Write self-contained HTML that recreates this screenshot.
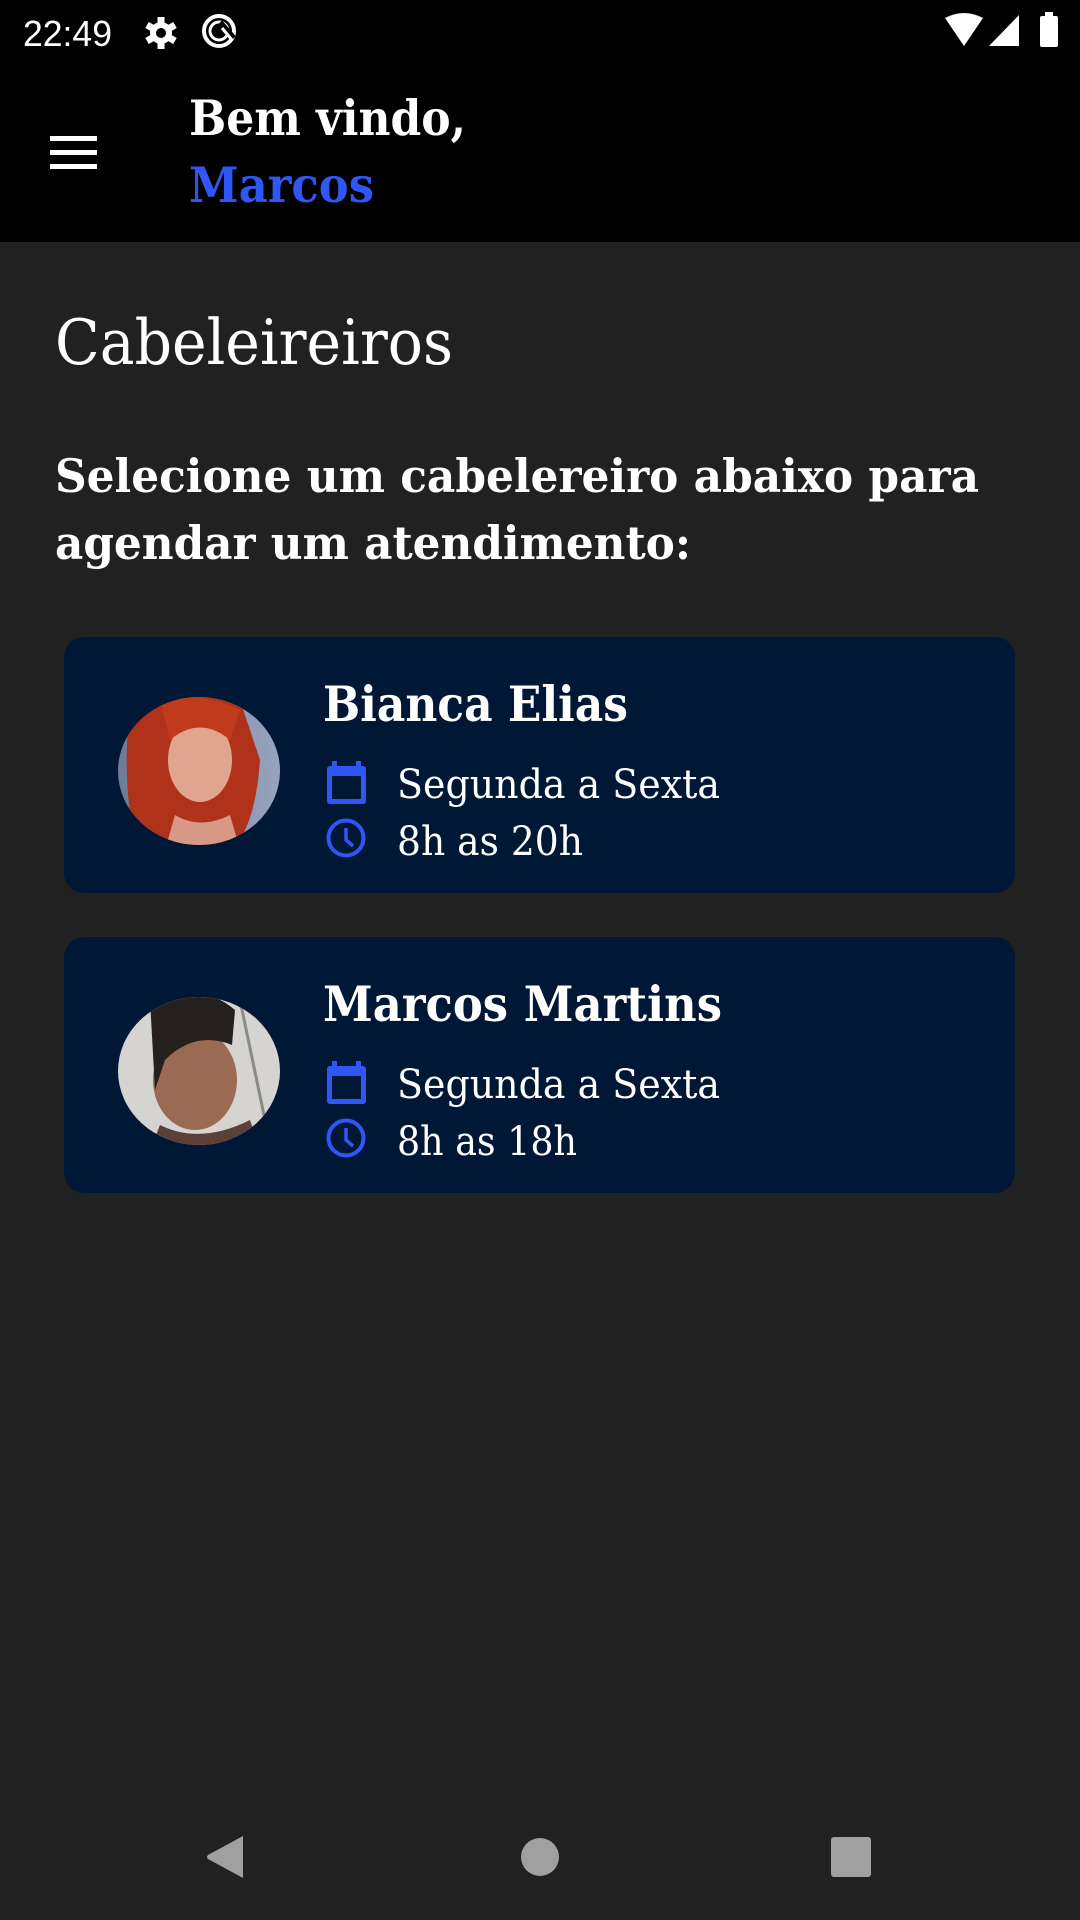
<!DOCTYPE html>
<html><head><meta charset="utf-8"><style>
html,body{margin:0;padding:0;background:#212121;width:1080px;height:1920px;overflow:hidden}
svg{display:block}
text{font-family:"DejaVu Serif","Liberation Serif",serif}
</style></head><body>
<svg width="1080" height="1920" viewBox="0 0 1080 1920" xmlns="http://www.w3.org/2000/svg">
<defs>
<clipPath id="c1"><ellipse cx="199" cy="771" rx="81" ry="74"/></clipPath>
<clipPath id="c2"><ellipse cx="199" cy="1071" rx="81" ry="74"/></clipPath>
<linearGradient id="bg1" x1="0" y1="0" x2="1" y2="0"><stop offset="0" stop-color="#6a7a95"/><stop offset="1" stop-color="#9aa6c0"/></linearGradient>
</defs>
<rect x="0" y="0" width="1080" height="242" fill="#000"/>
<rect x="0" y="242" width="1080" height="1678" fill="#212121"/>
<text x="23" y="46" style="font-family:'Liberation Sans',sans-serif" font-size="36" fill="#fff" textLength="89" lengthAdjust="spacingAndGlyphs">22:49</text>
<g fill="#fff">
<circle cx="161" cy="33" r="11"/>
<g stroke="#fff" stroke-width="7">
<line x1="161" y1="17" x2="161" y2="49"/><line x1="147" y1="25" x2="175" y2="41"/><line x1="147" y1="41" x2="175" y2="25"/>
</g>
<circle cx="161" cy="33" r="5" fill="#000"/>
</g>
<circle cx="219" cy="31" r="15" fill="none" stroke="#fff" stroke-width="4"/>
<circle cx="219" cy="31" r="9" fill="none" stroke="#fff" stroke-width="3"/>
<path d="M213 33 L222 24 L234 38" fill="none" stroke="#000" stroke-width="5"/>
<path d="M222 28 L232 40" fill="none" stroke="#fff" stroke-width="3"/>
<path d="M945 18 Q964 8 983 18 L964 46 Z" fill="#fff"/>
<path d="M1019 15 L1019 46 L989 46 Z" fill="#fff"/>
<rect x="1040" y="16" width="18" height="31" rx="2" fill="#fff"/>
<rect x="1045" y="12" width="8" height="5" fill="#fff"/>
<rect x="50" y="136" width="47" height="5" fill="#fff"/>
<rect x="50" y="150" width="47" height="5" fill="#fff"/>
<rect x="50" y="164" width="47" height="5" fill="#fff"/>
<text x="189" y="135" font-size="49" font-weight="bold" fill="#fff" textLength="277" lengthAdjust="spacingAndGlyphs">Bem vindo,</text>
<text x="189" y="202" font-size="49" font-weight="bold" fill="#3056f5" textLength="185" lengthAdjust="spacingAndGlyphs">Marcos</text>
<text x="55" y="364" font-size="63" fill="#fff" textLength="398" lengthAdjust="spacingAndGlyphs">Cabeleireiros</text>
<text x="55" y="492" font-size="46" font-weight="bold" fill="#fff" textLength="924" lengthAdjust="spacingAndGlyphs">Selecione um cabelereiro abaixo para</text>
<text x="55" y="559" font-size="46" font-weight="bold" fill="#fff" textLength="636" lengthAdjust="spacingAndGlyphs">agendar um atendimento:</text>
<rect x="64" y="637" width="951" height="256" rx="20" fill="#001736"/>
<g clip-path="url(#c1)">
<rect x="110" y="690" width="180" height="160" fill="url(#bg1)"/>
<path d="M130 700 Q190 680 240 700 L260 760 Q255 830 230 850 L140 850 Q120 800 130 700Z" fill="#b0321a"/>
<ellipse cx="200" cy="760" rx="32" ry="42" fill="#e0a58e"/>
<path d="M160 700 Q200 690 240 710 L230 740 Q200 715 170 740Z" fill="#c23a1c"/>
<path d="M175 815 Q200 830 230 815 L240 850 L165 850Z" fill="#d89a86"/>
</g>
<text x="323" y="721" font-size="49" font-weight="bold" fill="#fff" textLength="305" lengthAdjust="spacingAndGlyphs">Bianca Elias</text>
<g fill="#3056f5">
<rect x="327" y="766" width="39" height="38" rx="3"/>
<rect x="332" y="776" width="29" height="23" fill="#001736"/>
<rect x="332" y="761" width="5" height="8"/><rect x="356" y="761" width="5" height="8"/>
</g>
<circle cx="346" cy="838" r="17.5" fill="none" stroke="#3056f5" stroke-width="4"/>
<path d="M346 828 V840 L353 846" fill="none" stroke="#3056f5" stroke-width="3.5"/>
<text x="397" y="798" font-size="40" fill="#fff" textLength="323" lengthAdjust="spacingAndGlyphs">Segunda a Sexta</text>
<text x="397" y="855" font-size="40" fill="#fff" textLength="186" lengthAdjust="spacingAndGlyphs">8h as 20h</text>
<rect x="64" y="937" width="951" height="256" rx="20" fill="#001736"/>
<g clip-path="url(#c2)">
<rect x="110" y="990" width="180" height="160" fill="#d6d4d0"/>
<path d="M240 1000 L265 1120" stroke="#8a8a88" stroke-width="3"/>
<ellipse cx="195" cy="1080" rx="42" ry="50" fill="#9a6a52"/>
<path d="M150 1000 Q200 980 235 1010 L232 1045 Q195 1030 165 1060 L155 1090Z" fill="#25201e"/>
<path d="M160 1125 Q200 1145 250 1120 L260 1150 L150 1150Z" fill="#5a4038"/>
</g>
<text x="323" y="1021" font-size="49" font-weight="bold" fill="#fff" textLength="399" lengthAdjust="spacingAndGlyphs">Marcos Martins</text>
<g fill="#3056f5">
<rect x="327" y="1066" width="39" height="38" rx="3"/>
<rect x="332" y="1076" width="29" height="23" fill="#001736"/>
<rect x="332" y="1061" width="5" height="8"/><rect x="356" y="1061" width="5" height="8"/>
</g>
<circle cx="346" cy="1138" r="17.5" fill="none" stroke="#3056f5" stroke-width="4"/>
<path d="M346 1128 V1140 L353 1146" fill="none" stroke="#3056f5" stroke-width="3.5"/>
<text x="397" y="1098" font-size="40" fill="#fff" textLength="323" lengthAdjust="spacingAndGlyphs">Segunda a Sexta</text>
<text x="397" y="1155" font-size="40" fill="#fff" textLength="180" lengthAdjust="spacingAndGlyphs">8h as 18h</text>
<path d="M243 1836 L243 1878 L208 1859 Q206 1857 208 1855 Z" fill="#a0a0a0"/>
<circle cx="540" cy="1857" r="19" fill="#a0a0a0"/>
<rect x="831" y="1837" width="40" height="40" rx="3" fill="#a0a0a0"/>
</svg>
</body></html>
